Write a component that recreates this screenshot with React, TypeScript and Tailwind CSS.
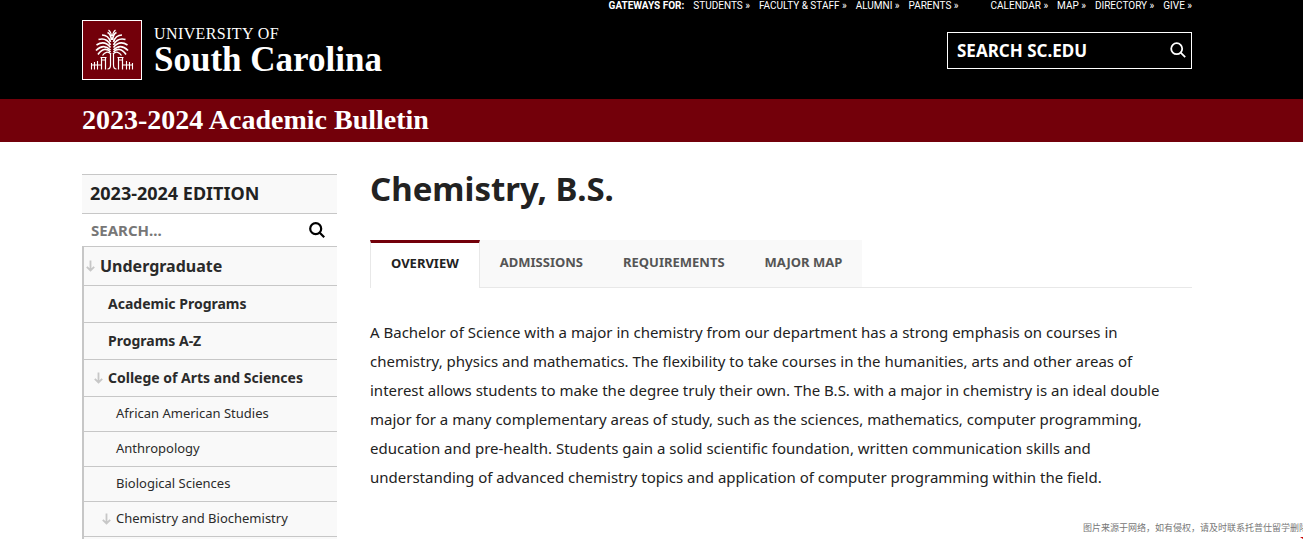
import React from 'react';
import { clsx } from 'clsx';

const gateways = ['STUDENTS', 'FACULTY & STAFF', 'ALUMNI', 'PARENTS'];
const quickLinks = ['CALENDAR', 'MAP', 'DIRECTORY', 'GIVE'];
const tabs = ['OVERVIEW', 'ADMISSIONS', 'REQUIREMENTS', 'MAJOR MAP'];

const navItems = [
  { label: 'Undergraduate', level: 0, open: true },
  { label: 'Academic Programs', level: 1, open: false },
  { label: 'Programs A-Z', level: 1, open: false },
  { label: 'College of Arts and Sciences', level: 1, open: true },
  { label: 'African American Studies', level: 2, open: false },
  { label: 'Anthropology', level: 2, open: false },
  { label: 'Biological Sciences', level: 2, open: false },
  { label: 'Chemistry and Biochemistry', level: 2, open: true },
];

const levelStyles = [
  'h-[39px] pl-0.5 text-base font-bold',
  'h-[37px] pl-2.5 text-sm font-bold',
  'h-[35px] pl-[18px] text-[13px]',
];

function PalmHalf() {
  return (
    <g fill="none" stroke="#fff">
      <g strokeWidth="1.7">
        <path d="M29.500 20C29 16 28 13.500 25.500 12.500" />
        <path d="M28.500 22C27 17 24 15 20 15" />
        <path d="M28.500 25C26 20 22 18 16.500 19.500" />
        <path d="M28.500 27.500C25 23 20 21.500 14.500 25" />
        <path d="M28.500 30C24 25.500 19 25.500 14 30.500" />
        <path d="M28.500 32C25 28 20 28.500 16 34.500" />
        <path d="M29 34C26 31 22.500 32 20.500 35.500" strokeWidth="1.300" />
      </g>
      <path d="M29.500 16C29 13 28 11 26.500 10" strokeWidth="1.300" />
      <path d="M28.500 33V45C28.500 48 27 49 25.500 49" strokeWidth="1.200" />
      <path d="M18.500 37.500H24.500M19 40H24" strokeWidth="1.200" />
      <path d="M19.500 38V49.500M23.500 38V49.500" strokeWidth="1.200" />
      <path d="M9.500 43V49.500M12.500 42V49.500M15.500 41V49.500M9 45H19" strokeWidth="1.100" />
    </g>
  );
}

function PalmLogo() {
  return (
    <svg viewBox="0 0 60 60" className="h-15 w-15 shrink-0" aria-hidden="true">
      <rect x="0.5" y="0.5" width="59" height="59" fill="#73000a" stroke="#fff" />
      <PalmHalf />
      <g transform="matrix(-1 0 0 1 60 0)">
        <PalmHalf />
      </g>
    </svg>
  );
}

function SearchIcon({ className }: { className: string }) {
  return (
    <svg viewBox="0 0 16 16" className={className} fill="none" stroke="currentColor" aria-hidden="true">
      <circle cx="6.700" cy="6.700" r="5.500" />
      <path d="M10.700 10.700L15.200 15.200" />
    </svg>
  );
}

function DownArrow() {
  return (
    <svg viewBox="0 0 9 12" className="h-3 w-[9px]" fill="none" stroke="#c7c7c7" strokeWidth="1.8" aria-hidden="true">
      <path d="M4.500 0.500V10.500M0.800 6.800L4.500 10.500L8.200 6.800" />
    </svg>
  );
}

function Header() {
  return (
    <header className="h-[99px] bg-black pr-[111px] pl-[82px] text-white">
      <div className="flex h-5 justify-end gap-8 font-[Roboto,sans-serif] text-[10px] leading-3">
        <nav aria-label="Gateways" className="flex gap-[9px]">
          <span className="font-bold">GATEWAYS FOR:</span>
          {gateways.map((item) => (
            <a key={item} href="#">{item} »</a>
          ))}
        </nav>
        <nav aria-label="Quick links" className="flex gap-[9px]">
          {quickLinks.map((item) => (
            <a key={item} href="#">{item} »</a>
          ))}
        </nav>
      </div>
      <div className="flex justify-between">
        <a href="#" className="flex gap-3">
          <PalmLogo />
          <span className="flex flex-col pt-1.5 font-['Liberation_Serif',serif]">
            <span className="text-base leading-4 tracking-wide">UNIVERSITY OF</span>
            <span className="text-[35px] leading-9 font-bold">South Carolina</span>
          </span>
        </a>
        <form className="mt-3 flex h-[37px] w-[245px] items-center border border-white pr-[5px] pl-[9px]">
          <input
            aria-label="Search sc.edu"
            placeholder="SEARCH SC.EDU"
            className="min-w-0 flex-1 text-[17px] font-bold outline-none placeholder:text-white"
          />
          <button type="button" aria-label="Search" className="pb-0.5">
            <SearchIcon className="h-4 w-4 stroke-[1.8]" />
          </button>
        </form>
      </div>
    </header>
  );
}

function Sidebar() {
  return (
    <aside className="text-[#2b2b2b]">
      <h2 className="flex h-[39px] items-center border-t border-[#c7c7c7] bg-[#f9f9f9] pb-0.5 pl-2 text-lg font-bold text-[#222]">
        2023-2024 EDITION
      </h2>
      <form className="flex h-[33px] items-center border-t border-[#c7c7c7] pr-3 pl-[9px]">
        <input
          aria-label="Search the bulletin"
          placeholder="SEARCH..."
          className="min-w-0 flex-1 text-[15px] font-bold outline-none placeholder:text-[#777]"
        />
        <button type="button" aria-label="Search bulletin" className="text-black">
          <SearchIcon className="h-4 w-4 stroke-[2.2]" />
        </button>
      </form>
      <nav aria-label="Bulletin" className="border-l-2 border-[#c7c7c7]">
        {navItems.map(({ label, level, open }) => (
          <a
            key={label}
            href="#"
            className={clsx('flex items-center gap-1 border-t border-[#c7c7c7] bg-[#f9f9f9]', levelStyles[level])}
          >
            <span className="w-2.5">{open && <DownArrow />}</span>
            {label}
          </a>
        ))}
        <div className="border-t border-[#c7c7c7] bg-[#f9f9f9] pb-9" />
      </nav>
    </aside>
  );
}

export default function App() {
  return (
    <div className="relative h-screen overflow-hidden bg-white font-['Noto_Sans',sans-serif]">
      <Header />
      <div className="h-[43px] bg-[#73000a] pl-[82px] font-['Liberation_Serif',serif] text-[28px] leading-[42px] font-bold text-white">
        2023-2024 Academic Bulletin
      </div>
      <div className="grid grid-cols-[255px_1fr] gap-[33px] pt-8 pr-[111px] pl-[82px]">
        <Sidebar />
        <main className="text-[#222]">
          <h1 className="mb-9 text-[33px] leading-[30px] font-bold">Chemistry, B.S.</h1>
          <div role="tablist" className="flex h-12 border-b border-[#e8e8e8] text-[13px] font-bold">
            {tabs.map((tab, i) => (
              <button
                key={tab}
                type="button"
                role="tab"
                aria-selected={i === 0}
                className={clsx(
                  'h-12 border-t-3 px-5 pb-1',
                  i === 0
                    ? 'border-x border-x-[#e8e8e8] border-t-[#73000a] bg-white'
                    : 'border-b border-t-transparent border-b-[#e8e8e8] bg-[#f9f9f9] text-[#555]',
                )}
              >
                {tab}
              </button>
            ))}
          </div>
          <p className="mt-[30px] pr-5 text-[15px] leading-[29px]">
            A Bachelor of Science with a major in chemistry from our department has a strong emphasis on courses in
            chemistry, physics and mathematics. The flexibility to take courses in the humanities, arts and other areas of
            interest allows students to make the degree truly their own. The B.S. with a major in chemistry is an ideal double
            major for a many complementary areas of study, such as the sciences, mathematics, computer programming,
            education and pre-health. Students gain a solid scientific foundation, written communication skills and
            understanding of advanced chemistry topics and application of computer programming within the field.
          </p>
        </main>
      </div>
      <div className="absolute bottom-1 left-[1083px] font-['Noto_Sans_CJK_SC',sans-serif] text-[9px] leading-[14px] whitespace-nowrap text-[#777]">
        图片来源于网络，如有侵权，请及时联系托普仕留学删除
      </div>
      <svg viewBox="0 0 3 2" className="absolute right-0 bottom-0 h-0.5 w-[3px]" aria-hidden="true">
        <path d="M0 0H3V2Z" fill="#c00" />
      </svg>
    </div>
  );
}
